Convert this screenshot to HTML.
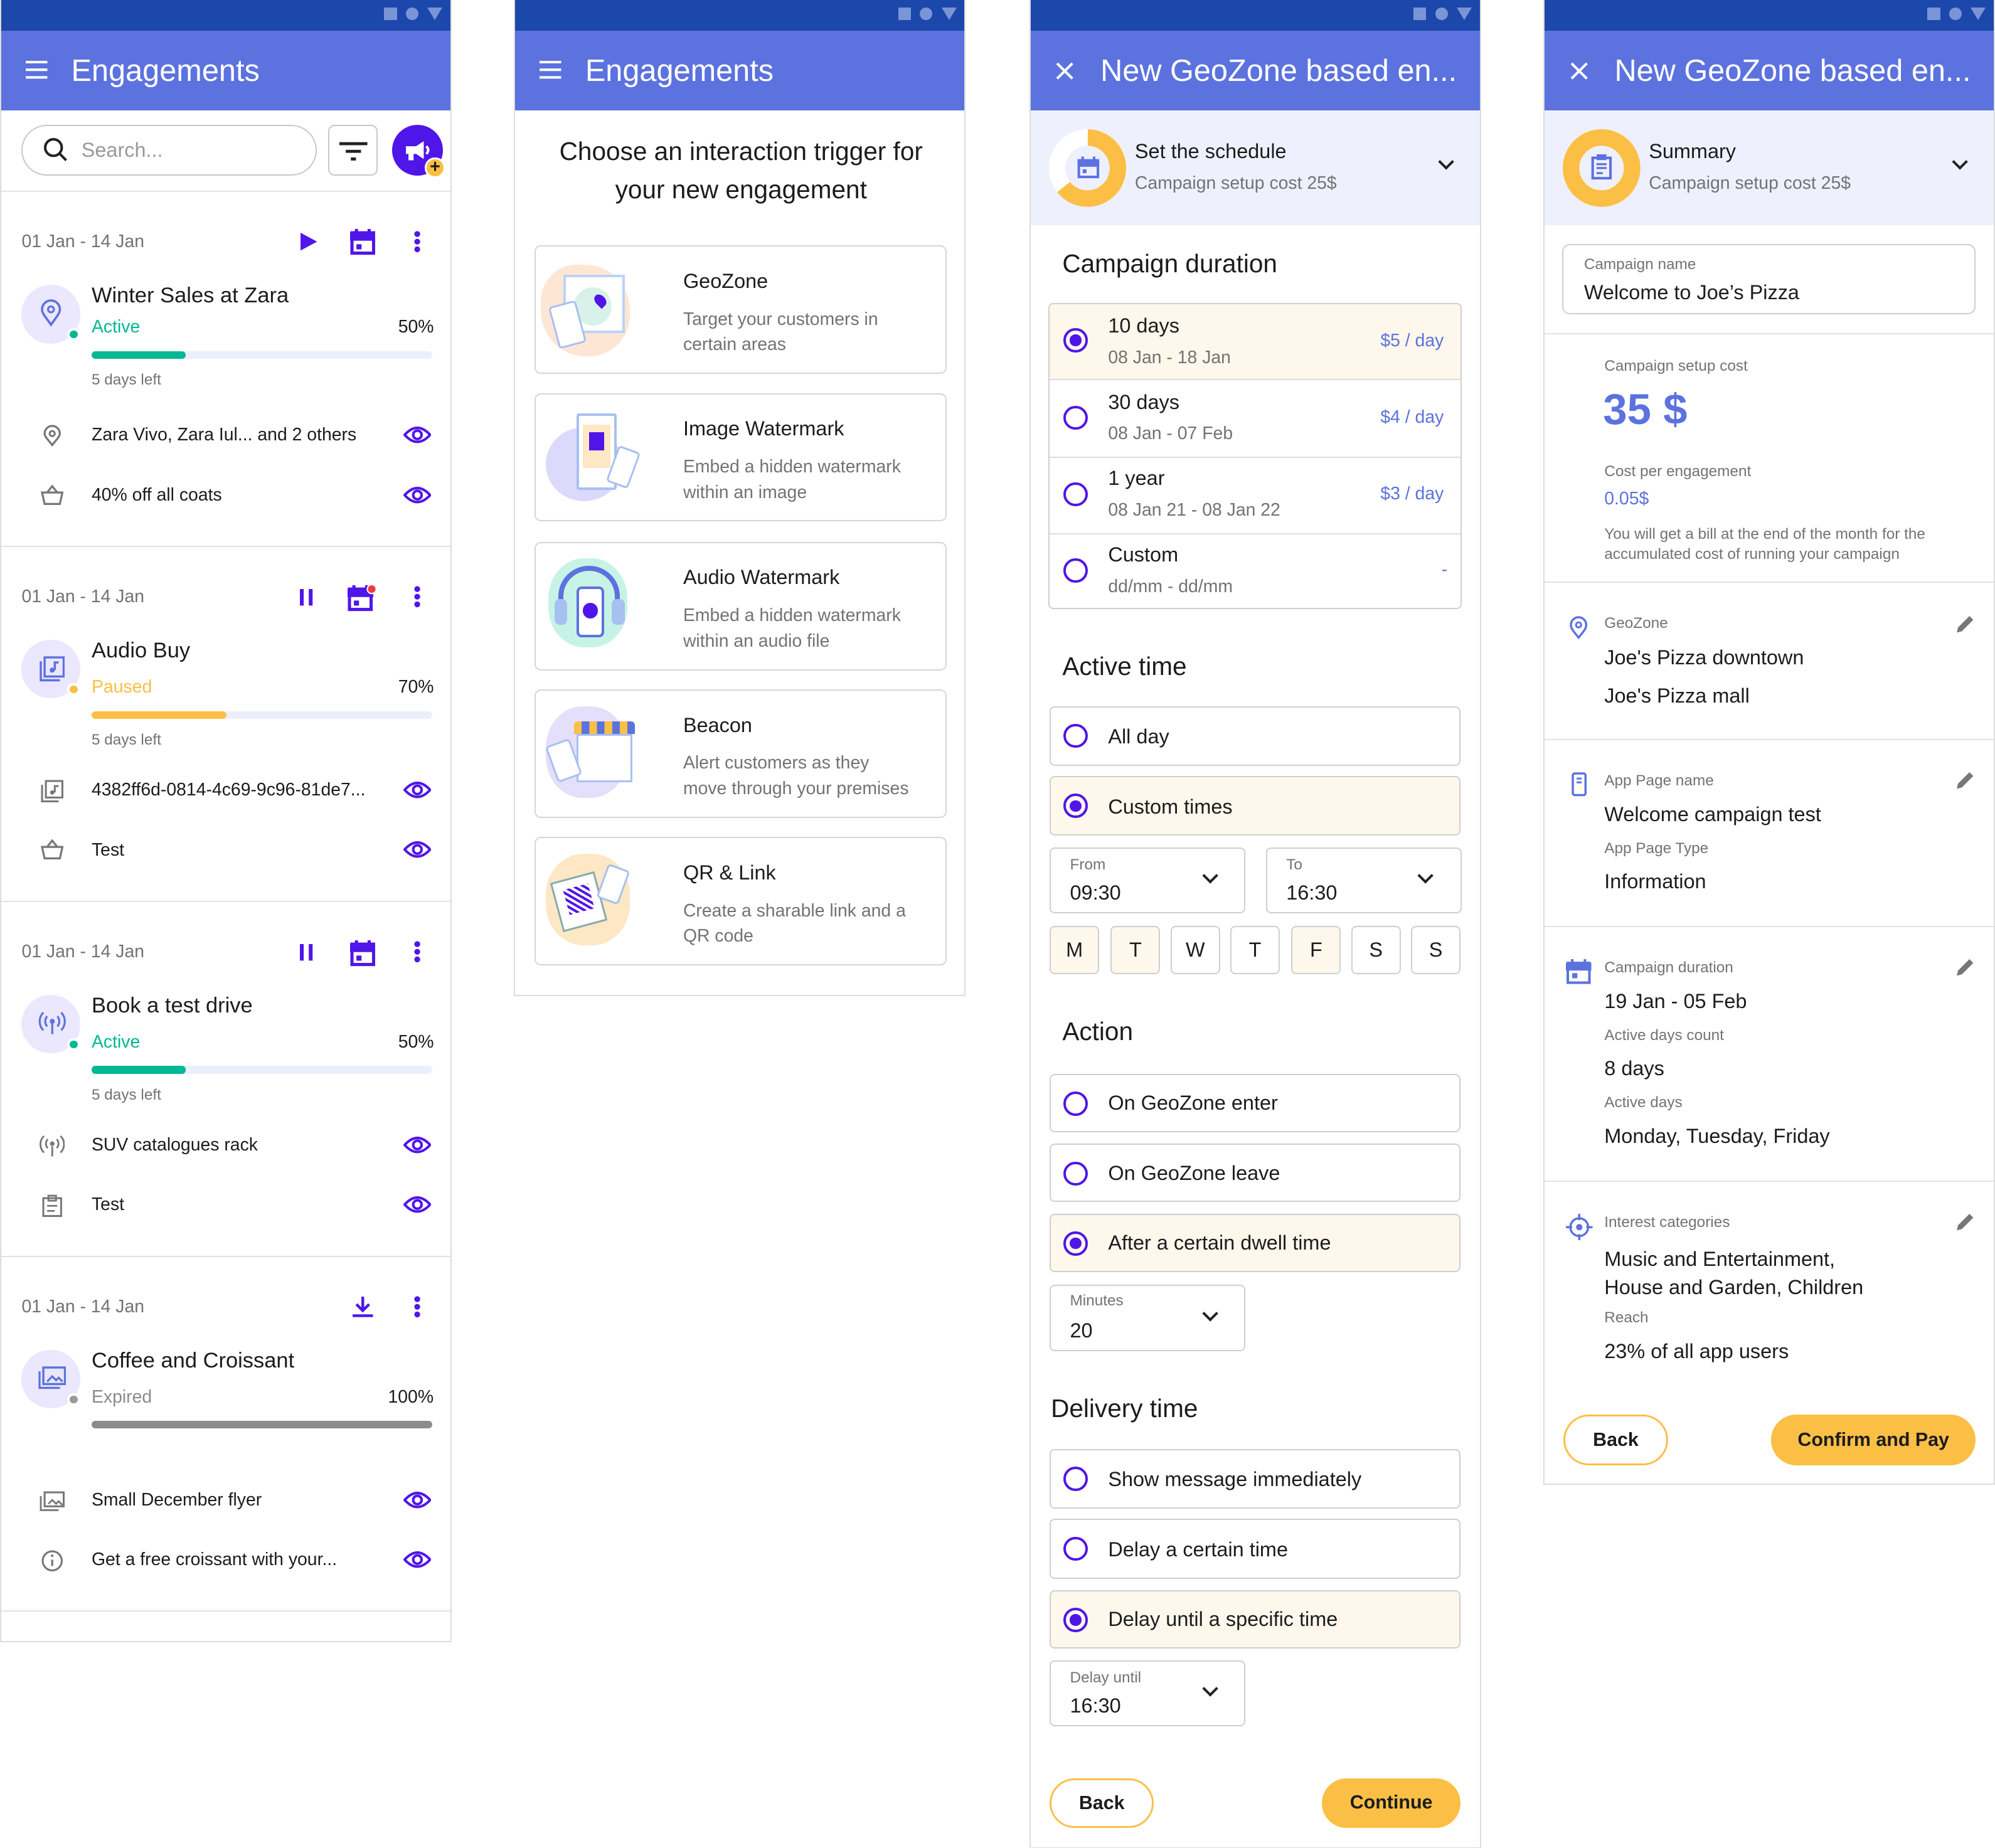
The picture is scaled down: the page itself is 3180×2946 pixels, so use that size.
<!DOCTYPE html>
<html><head><meta charset="utf-8"><style>
*{margin:0;padding:0;box-sizing:border-box}
html,body{width:3180px;height:2946px;overflow:hidden;background:#fff}
#root{zoom:2.028;width:1568px;height:1453px;position:relative;font-family:"Liberation Sans",sans-serif;color:#1c1c1c}
.p{position:absolute;top:0;background:#fff;border:1px solid #dcdcdc;border-top:none}
.sb{position:absolute;left:0;right:0;top:0;height:24px;background:#1c47ab}
.sb i{position:absolute;top:6px;background:#7a95d6}
.hd{position:absolute;left:0;right:0;top:24px;height:63px;background:#5c72de;color:#fff}
.hd span{position:absolute;left:55px;top:17px;font-size:24px;line-height:30px}
.t{position:absolute;line-height:1;white-space:nowrap}
.g{color:#737373}
.ln{position:absolute;left:0;right:0;height:1px;background:#e2e2e2}
.bx{position:absolute;border:1px solid #cfcfcf;border-radius:4px;background:#fff}
.sel{background:#fdf7ec}
.rad{position:absolute;width:19px;height:19px;border:2px solid #5015e8;border-radius:50%}
.rad.on::after{content:"";position:absolute;left:3px;top:3px;width:9px;height:9px;border-radius:50%;background:#5015e8}
.blue{color:#5c72de}
.av{position:absolute;left:16px;width:46px;height:46px;border-radius:50%;background:#ebe7fd}
.dot{position:absolute;width:10px;height:10px;border-radius:50%;border:2px solid #fff}
.bar{position:absolute;left:71px;width:268px;height:6px;border-radius:3px;background:#eceffb}
.bar b{display:block;height:6px;border-radius:3px}
.btn{position:absolute;border-radius:20px;font-size:15px;line-height:38px;text-align:center;font-weight:bold}
.chev{position:absolute;width:9px;height:9px;border-right:2px solid #222;border-bottom:2px solid #222;transform:rotate(45deg)}
.card{position:absolute;left:15px;width:324px;height:101px;border:1px solid #d6d6d6;border-radius:5px}
.day{position:absolute;top:728px;width:39px;height:38px;border:1px solid #cfcfcf;border-radius:4px;font-size:16px;line-height:36px;text-align:center}
</style></head><body><div id="root">

<!-- PANEL 1 -->
<div class="p" style="left:0;width:355px;height:1291px">
<div class="sb"><i style="left:301px;width:10px;height:10px"></i><i style="left:318px;width:10px;height:10px;border-radius:50%"></i><i style="left:335px;width:0;height:0;background:none;border-left:6px solid transparent;border-right:6px solid transparent;border-top:10px solid #7a95d6"></i></div>
<div class="hd"><svg style="position:absolute;left:19px;top:24px" width="18" height="14"><path d="M0 1h17M0 7h17M0 13h17" stroke="#fff" stroke-width="2"/></svg><span>Engagements</span></div>
<div style="position:absolute;left:16px;top:98px;width:232px;height:40px;border:1px solid #c8c8c8;border-radius:20px"></div>
<svg style="position:absolute;left:33px;top:108px" width="20" height="20"><circle cx="8" cy="8" r="6.5" fill="none" stroke="#222" stroke-width="2"/><path d="M13 13l5 5" stroke="#222" stroke-width="2"/></svg>
<div class="t" style="left:63px;top:110px;font-size:16px;color:#999">Search...</div>
<div style="position:absolute;left:257px;top:98px;width:39px;height:40px;border:1px solid #c8c8c8;border-radius:5px"></div>
<svg style="position:absolute;left:266px;top:110px" width="22" height="16"><path d="M0 3h22M5 9h12M9 15h4" stroke="#222" stroke-width="2.4"/></svg>
<div style="position:absolute;left:307px;top:98px;width:40px;height:40px;border-radius:50%;background:#5015e8"></div>
<svg style="position:absolute;left:316px;top:109px" width="22" height="18"><path d="M2 6h8l6-4v14l-6-4H2z M4 12v5h4v-5" fill="#fff"/><path d="M18 6q3 3 0 6" stroke="#fff" stroke-width="2" fill="none"/></svg>
<div style="position:absolute;left:333px;top:124px;width:16px;height:16px;border-radius:50%;background:#fbbf45;border:1.5px solid #fff;font-size:14px;line-height:12px;text-align:center;font-weight:bold">+</div>
<div class="ln" style="top:150px"></div>

<!-- card 1 -->
<div class="t g" style="left:16px;top:183px;font-size:14px">01 Jan - 14 Jan</div>
<svg style="position:absolute;left:233px;top:182px" width="16" height="16"><path d="M2 1l13 7-13 7z" fill="#5015e8"/></svg>
<svg style="position:absolute;left:274px;top:179px" width="20" height="22"><rect x="1.5" y="4" width="17" height="16" fill="none" stroke="#5015e8" stroke-width="2.5"/><path d="M1 5h18v4H1z M5 1v4M15 1v4" stroke="#5015e8" stroke-width="2.5" fill="#5015e8"/><rect x="5" y="13" width="4" height="4" fill="#5015e8"/></svg>
<svg style="position:absolute;left:324px;top:181px" width="6" height="18"><circle cx="3" cy="3" r="2.3" fill="#5015e8"/><circle cx="3" cy="9" r="2.3" fill="#5015e8"/><circle cx="3" cy="15" r="2.3" fill="#5015e8"/></svg>
<div class="av" style="top:224px"></div><svg style="position:absolute;left:30px;top:235px" width="18" height="22"><path d="M9 20C4 13 2 11 2 8a7 7 0 0 1 14 0c0 3-2 5-7 12z" fill="none" stroke="#5c72de" stroke-width="1.8"/><circle cx="9" cy="8" r="2.3" fill="none" stroke="#5c72de" stroke-width="1.6"/></svg>
<div class="dot" style="left:52px;top:258px;background:#00b894"></div>
<div class="t" style="left:71px;top:224px;font-size:17px">Winter Sales at Zara</div>
<div class="t" style="left:71px;top:250px;font-size:14px;color:#00b894">Active</div>
<div class="t" style="left:312px;top:250px;font-size:14px">50%</div>
<div class="bar" style="top:276px"><b style="width:74px;background:#00b894"></b></div>
<div class="t g" style="left:71px;top:293px;font-size:12px">5 days left</div>
<svg style="position:absolute;left:32px;top:334px" width="16" height="18"><path d="M8 16C4 11 2 9 2 7a6 6 0 0 1 12 0c0 2-2 4-6 9z" fill="none" stroke="#777" stroke-width="1.6"/><circle cx="8" cy="7" r="2" fill="none" stroke="#777" stroke-width="1.5"/></svg>
<div class="t" style="left:71px;top:335px;font-size:14px">Zara Vivo, Zara Iul... and 2 others</div>
<svg style="position:absolute;left:316px;top:334px" width="22" height="16"><path d="M1 8Q11-3 21 8Q11 19 1 8z" fill="none" stroke="#5015e8" stroke-width="2"/><circle cx="11" cy="8" r="3.3" fill="none" stroke="#5015e8" stroke-width="2"/></svg>
<svg style="position:absolute;left:31px;top:381px" width="18" height="16"><path d="M1 6h16l-2 9H3z M5 6l4-5 4 5" fill="none" stroke="#777" stroke-width="1.6"/></svg>
<div class="t" style="left:71px;top:382px;font-size:14px">40% off all coats</div>
<svg style="position:absolute;left:316px;top:381px" width="22" height="16"><path d="M1 8Q11-3 21 8Q11 19 1 8z" fill="none" stroke="#5015e8" stroke-width="2"/><circle cx="11" cy="8" r="3.3" fill="none" stroke="#5015e8" stroke-width="2"/></svg>
<div class="ln" style="top:429px"></div>

<!-- card 2 -->
<div class="t g" style="left:16px;top:462px;font-size:14px">01 Jan - 14 Jan</div>
<svg style="position:absolute;left:234px;top:462px" width="12" height="15"><path d="M2 1v13M9 1v13" stroke="#5015e8" stroke-width="3"/></svg>
<svg style="position:absolute;left:272px;top:459px" width="24" height="22"><rect x="1.5" y="4" width="17" height="16" fill="none" stroke="#5015e8" stroke-width="2.5"/><path d="M1 5h18v4H1z M5 1v4M15 1v4" stroke="#5015e8" stroke-width="2.5" fill="#5015e8"/><rect x="5" y="13" width="4" height="4" fill="#5015e8"/><circle cx="19" cy="4" r="3.5" fill="#f03b3b" stroke="#fff"/></svg>
<svg style="position:absolute;left:324px;top:460px" width="6" height="18"><circle cx="3" cy="3" r="2.3" fill="#5015e8"/><circle cx="3" cy="9" r="2.3" fill="#5015e8"/><circle cx="3" cy="15" r="2.3" fill="#5015e8"/></svg>
<div class="av" style="top:503px"></div><svg style="position:absolute;left:30px;top:516px" width="20" height="20"><rect x="4" y="1" width="15" height="15" fill="none" stroke="#5c72de" stroke-width="1.7"/><path d="M1 4v15h15" fill="none" stroke="#5c72de" stroke-width="1.7"/><circle cx="10" cy="11" r="2" fill="#5c72de"/><path d="M12 11V5h3" stroke="#5c72de" stroke-width="1.7" fill="none"/></svg>
<div class="dot" style="left:52px;top:537px;background:#fbbf45"></div>
<div class="t" style="left:71px;top:503px;font-size:17px">Audio Buy</div>
<div class="t" style="left:71px;top:533px;font-size:14px;color:#fbbf45">Paused</div>
<div class="t" style="left:312px;top:533px;font-size:14px">70%</div>
<div class="bar" style="top:559px"><b style="width:106px;background:#fbbf45"></b></div>
<div class="t g" style="left:71px;top:576px;font-size:12px">5 days left</div>
<svg style="position:absolute;left:31px;top:613px" width="18" height="18"><rect x="4" y="1" width="13" height="13" fill="none" stroke="#777" stroke-width="1.5"/><path d="M1 4v13h13" fill="none" stroke="#777" stroke-width="1.5"/><circle cx="9" cy="10" r="1.7" fill="#777"/><path d="M11 10V5h3" stroke="#777" stroke-width="1.5" fill="none"/></svg>
<div class="t" style="left:71px;top:614px;font-size:14px">4382ff6d-0814-4c69-9c96-81de7...</div>
<svg style="position:absolute;left:316px;top:613px" width="22" height="16"><path d="M1 8Q11-3 21 8Q11 19 1 8z" fill="none" stroke="#5015e8" stroke-width="2"/><circle cx="11" cy="8" r="3.3" fill="none" stroke="#5015e8" stroke-width="2"/></svg>
<svg style="position:absolute;left:31px;top:660px" width="18" height="16"><path d="M1 6h16l-2 9H3z M5 6l4-5 4 5" fill="none" stroke="#777" stroke-width="1.6"/></svg>
<div class="t" style="left:71px;top:661px;font-size:14px">Test</div>
<svg style="position:absolute;left:316px;top:660px" width="22" height="16"><path d="M1 8Q11-3 21 8Q11 19 1 8z" fill="none" stroke="#5015e8" stroke-width="2"/><circle cx="11" cy="8" r="3.3" fill="none" stroke="#5015e8" stroke-width="2"/></svg>
<div class="ln" style="top:708px"></div>

<!-- card 3 -->
<div class="t g" style="left:16px;top:741px;font-size:14px">01 Jan - 14 Jan</div>
<svg style="position:absolute;left:234px;top:741px" width="12" height="15"><path d="M2 1v13M9 1v13" stroke="#5015e8" stroke-width="3"/></svg>
<svg style="position:absolute;left:274px;top:738px" width="20" height="22"><rect x="1.5" y="4" width="17" height="16" fill="none" stroke="#5015e8" stroke-width="2.5"/><path d="M1 5h18v4H1z M5 1v4M15 1v4" stroke="#5015e8" stroke-width="2.5" fill="#5015e8"/><rect x="5" y="13" width="4" height="4" fill="#5015e8"/></svg>
<svg style="position:absolute;left:324px;top:739px" width="6" height="18"><circle cx="3" cy="3" r="2.3" fill="#5015e8"/><circle cx="3" cy="9" r="2.3" fill="#5015e8"/><circle cx="3" cy="15" r="2.3" fill="#5015e8"/></svg>
<div class="av" style="top:782px"></div><svg style="position:absolute;left:29px;top:795px" width="22" height="20"><circle cx="11" cy="8" r="2" fill="#5c72de"/><path d="M11 10v8M7 4a6 6 0 0 0 0 8M15 4a6 6 0 0 1 0 8M4 1a10 10 0 0 0 0 14M18 1a10 10 0 0 1 0 14" stroke="#5c72de" stroke-width="1.6" fill="none"/></svg>
<div class="dot" style="left:52px;top:816px;background:#00b894"></div>
<div class="t" style="left:71px;top:782px;font-size:17px">Book a test drive</div>
<div class="t" style="left:71px;top:812px;font-size:14px;color:#00b894">Active</div>
<div class="t" style="left:312px;top:812px;font-size:14px">50%</div>
<div class="bar" style="top:838px"><b style="width:74px;background:#00b894"></b></div>
<div class="t g" style="left:71px;top:855px;font-size:12px">5 days left</div>
<svg style="position:absolute;left:30px;top:892px" width="20" height="18"><circle cx="10" cy="7" r="1.8" fill="#777"/><path d="M10 9v8M6.5 3.5a5 5 0 0 0 0 7M13.5 3.5a5 5 0 0 1 0 7M3.5 1a9 9 0 0 0 0 13M16.5 1a9 9 0 0 1 0 13" stroke="#777" stroke-width="1.4" fill="none"/></svg>
<div class="t" style="left:71px;top:893px;font-size:14px">SUV catalogues rack</div>
<svg style="position:absolute;left:316px;top:892px" width="22" height="16"><path d="M1 8Q11-3 21 8Q11 19 1 8z" fill="none" stroke="#5015e8" stroke-width="2"/><circle cx="11" cy="8" r="3.3" fill="none" stroke="#5015e8" stroke-width="2"/></svg>
<svg style="position:absolute;left:32px;top:939px" width="16" height="18"><rect x="1" y="3" width="14" height="14" fill="none" stroke="#777" stroke-width="1.5"/><path d="M5 1h6v4H5z M4 9h8M4 13h6" stroke="#777" stroke-width="1.4" fill="none"/></svg>
<div class="t" style="left:71px;top:940px;font-size:14px">Test</div>
<svg style="position:absolute;left:316px;top:939px" width="22" height="16"><path d="M1 8Q11-3 21 8Q11 19 1 8z" fill="none" stroke="#5015e8" stroke-width="2"/><circle cx="11" cy="8" r="3.3" fill="none" stroke="#5015e8" stroke-width="2"/></svg>
<div class="ln" style="top:987px"></div>

<!-- card 4 -->
<div class="t g" style="left:16px;top:1020px;font-size:14px">01 Jan - 14 Jan</div>
<svg style="position:absolute;left:275px;top:1018px" width="18" height="18"><path d="M9 1v11M4 7l5 5 5-5M1 16h16" stroke="#5015e8" stroke-width="2.2" fill="none"/></svg>
<svg style="position:absolute;left:324px;top:1018px" width="6" height="18"><circle cx="3" cy="3" r="2.3" fill="#5015e8"/><circle cx="3" cy="9" r="2.3" fill="#5015e8"/><circle cx="3" cy="15" r="2.3" fill="#5015e8"/></svg>
<div class="av" style="top:1061px"></div><svg style="position:absolute;left:29px;top:1074px" width="22" height="18"><rect x="4" y="1" width="17" height="13" fill="none" stroke="#5c72de" stroke-width="1.7"/><path d="M1 4v13h16M7 12l4-4 3 3 2-2 3 3" stroke="#5c72de" stroke-width="1.6" fill="none"/></svg>
<div class="dot" style="left:52px;top:1095px;background:#9a9a9a"></div>
<div class="t" style="left:71px;top:1061px;font-size:17px">Coffee and Croissant</div>
<div class="t g" style="left:71px;top:1091px;font-size:14px;color:#8a8a8a">Expired</div>
<div class="t" style="left:304px;top:1091px;font-size:14px">100%</div>
<div class="bar" style="top:1117px"><b style="width:268px;background:#8c8c8c"></b></div>
<svg style="position:absolute;left:30px;top:1172px" width="20" height="16"><rect x="4" y="1" width="15" height="11" fill="none" stroke="#777" stroke-width="1.5"/><path d="M1 4v11h14M7 10l3-3 3 3 2-2 3 3" stroke="#777" stroke-width="1.4" fill="none"/></svg>
<div class="t" style="left:71px;top:1172px;font-size:14px">Small December flyer</div>
<svg style="position:absolute;left:316px;top:1171px" width="22" height="16"><path d="M1 8Q11-3 21 8Q11 19 1 8z" fill="none" stroke="#5015e8" stroke-width="2"/><circle cx="11" cy="8" r="3.3" fill="none" stroke="#5015e8" stroke-width="2"/></svg>
<svg style="position:absolute;left:31px;top:1218px" width="18" height="18"><circle cx="9" cy="9" r="7.5" fill="none" stroke="#777" stroke-width="1.5"/><path d="M9 8v5" stroke="#777" stroke-width="1.6"/><circle cx="9" cy="5" r="1" fill="#777"/></svg>
<div class="t" style="left:71px;top:1219px;font-size:14px">Get a free croissant with your...</div>
<svg style="position:absolute;left:316px;top:1218px" width="22" height="16"><path d="M1 8Q11-3 21 8Q11 19 1 8z" fill="none" stroke="#5015e8" stroke-width="2"/><circle cx="11" cy="8" r="3.3" fill="none" stroke="#5015e8" stroke-width="2"/></svg>
<div class="ln" style="top:1266px"></div>
</div>

<!-- PANEL 2 -->
<div class="p" style="left:404px;width:355px;height:783px">
<div class="sb"><i style="left:301px;width:10px;height:10px"></i><i style="left:318px;width:10px;height:10px;border-radius:50%"></i><i style="left:335px;width:0;height:0;background:none;border-left:6px solid transparent;border-right:6px solid transparent;border-top:10px solid #7a95d6"></i></div>
<div class="hd"><svg style="position:absolute;left:19px;top:24px" width="18" height="14"><path d="M0 1h17M0 7h17M0 13h17" stroke="#fff" stroke-width="2"/></svg><span>Engagements</span></div>
<div class="t" style="left:0;width:355px;text-align:center;top:104px;font-size:20px;line-height:30px;white-space:normal">Choose an interaction trigger for<br>your new engagement</div>

<div class="card" style="top:193px"><div style="position:absolute;left:4px;top:14px;width:70px;height:72px;border-radius:40% 50% 45% 50%;background:#fde7d4"></div><div style="position:absolute;left:22px;top:22px;width:48px;height:46px;background:#fff;border:2px solid #bcd2f7"></div><div style="position:absolute;left:30px;top:32px;width:30px;height:30px;border-radius:50%;background:#d8f2ea"></div><div style="position:absolute;left:47px;top:37px;width:8px;height:11px;border-radius:50% 50% 50% 0;background:#5015e8;transform:rotate(-45deg)"></div><div style="position:absolute;left:14px;top:44px;width:22px;height:34px;background:#fff;border:1.5px solid #a8c0f0;border-radius:3px;transform:rotate(-15deg)"></div>
<div class="t" style="left:116px;top:19px;font-size:16px">GeoZone</div><div class="t g" style="left:116px;top:47px;font-size:14px;line-height:20px">Target your customers in<br>certain areas</div></div>

<div class="card" style="top:309px"><div style="position:absolute;left:8px;top:26px;width:60px;height:58px;border-radius:50%;background:#dcdafc"></div><div style="position:absolute;left:32px;top:15px;width:32px;height:60px;background:#fff;border:2px solid #a8c0f0;border-radius:2px"></div><div style="position:absolute;left:37px;top:24px;width:22px;height:34px;background:#fde7c4"></div><div style="position:absolute;left:42px;top:30px;width:12px;height:14px;background:#5015e8"></div><div style="position:absolute;left:60px;top:42px;width:18px;height:30px;background:#fff;border:1.5px solid #a8c0f0;border-radius:3px;transform:rotate(20deg)"></div>
<div class="t" style="left:116px;top:19px;font-size:16px">Image Watermark</div><div class="t g" style="left:116px;top:47px;font-size:14px;line-height:20px">Embed a hidden watermark<br>within an image</div></div>

<div class="card" style="top:426px"><div style="position:absolute;left:10px;top:12px;width:62px;height:70px;border-radius:45%;background:#c7f3e6"></div><div style="position:absolute;left:18px;top:18px;width:48px;height:40px;border:4px solid #5c72de;border-bottom:none;border-radius:24px 24px 0 0"></div><div style="position:absolute;left:15px;top:44px;width:10px;height:20px;background:#a8c0f0;border-radius:4px"></div><div style="position:absolute;left:60px;top:44px;width:10px;height:20px;background:#a8c0f0;border-radius:4px"></div><div style="position:absolute;left:32px;top:34px;width:22px;height:40px;background:#fff;border:2px solid #5c72de;border-radius:4px"></div><div style="position:absolute;left:37px;top:47px;width:12px;height:12px;border-radius:50%;background:#5015e8"></div>
<div class="t" style="left:116px;top:19px;font-size:16px">Audio Watermark</div><div class="t g" style="left:116px;top:47px;font-size:14px;line-height:20px">Embed a hidden watermark<br>within an audio file</div></div>

<div class="card" style="top:542px"><div style="position:absolute;left:8px;top:12px;width:64px;height:72px;border-radius:45%;background:#e4e0fb"></div><div style="position:absolute;left:30px;top:24px;width:48px;height:10px;background:repeating-linear-gradient(90deg,#fbbf45 0 6px,#5c72de 6px 12px);border-radius:3px 3px 0 0"></div><div style="position:absolute;left:32px;top:34px;width:44px;height:38px;background:#fff;border:1.5px solid #a8c0f0"></div><div style="position:absolute;left:12px;top:40px;width:20px;height:30px;background:#fff;border:1.5px solid #a8c0f0;border-radius:3px;transform:rotate(-20deg)"></div>
<div class="t" style="left:116px;top:19px;font-size:16px">Beacon</div><div class="t g" style="left:116px;top:47px;font-size:14px;line-height:20px">Alert customers as they<br>move through your premises</div></div>

<div class="card" style="top:658px"><div style="position:absolute;left:8px;top:12px;width:66px;height:72px;border-radius:45%;background:#fde7c4"></div><div style="position:absolute;left:16px;top:30px;width:36px;height:40px;background:#fff;border:1.5px solid #8aa;transform:rotate(-15deg)"></div><div style="position:absolute;left:24px;top:38px;width:20px;height:20px;background:repeating-linear-gradient(45deg,#5015e8 0 2px,#fff 2px 4px);transform:rotate(-15deg)"></div><div style="position:absolute;left:52px;top:22px;width:18px;height:28px;background:#fff;border:1.5px solid #a8c0f0;border-radius:3px;transform:rotate(20deg)"></div>
<div class="t" style="left:116px;top:19px;font-size:16px">QR &amp; Link</div><div class="t g" style="left:116px;top:47px;font-size:14px;line-height:20px">Create a sharable link and a<br>QR code</div></div>
</div>

<!-- PANEL 3 -->
<div class="p" style="left:809px;width:355px;height:1453px">
<div class="sb"><i style="left:301px;width:10px;height:10px"></i><i style="left:318px;width:10px;height:10px;border-radius:50%"></i><i style="left:335px;width:0;height:0;background:none;border-left:6px solid transparent;border-right:6px solid transparent;border-top:10px solid #7a95d6"></i></div>
<div class="hd"><svg style="position:absolute;left:20px;top:25px" width="14" height="14"><path d="M1 1l12 12M13 1L1 13" stroke="#fff" stroke-width="2"/></svg><span>New GeoZone based en...</span></div>
<div style="position:absolute;left:0;right:0;top:87px;height:90px;background:#eef0fe"></div>
<svg style="position:absolute;left:14px;top:101px" width="62" height="62"><circle cx="31" cy="31" r="24" fill="none" stroke="#fff" stroke-width="13"/><path d="M31 7A24 24 0 1 1 12 46" fill="none" stroke="#fbbf45" stroke-width="13"/><circle cx="31" cy="31" r="17" fill="#eef0fe"/><rect x="24" y="25" width="15" height="13" fill="none" stroke="#5c72de" stroke-width="2"/><path d="M24 26h15v3H24zM27 22v4M36 22v4" stroke="#5c72de" stroke-width="2" fill="#5c72de"/><rect x="27" y="32" width="3" height="3" fill="#5c72de"/></svg>
<div class="t" style="left:82px;top:111px;font-size:16px">Set the schedule</div>
<div class="t g" style="left:82px;top:137px;font-size:14px">Campaign setup cost 25$</div>
<div class="chev" style="left:322px;top:123px"></div>
<div class="t" style="left:25px;top:197px;font-size:20px">Campaign duration</div>
<div class="bx" style="left:14px;top:238px;width:325px;height:241px;overflow:hidden">
 <div class="sel" style="position:absolute;left:0;right:0;top:0;height:60px;border-bottom:1px solid #ddd"></div>
 <div style="position:absolute;left:0;right:0;top:120px;height:1px;background:#ddd"></div>
 <div style="position:absolute;left:0;right:0;top:180px;height:1px;background:#ddd"></div>
</div>
<div class="rad on" style="left:835px;top:258px;left:26px"></div>
<div class="rad" style="left:26px;top:319px"></div><div class="rad" style="left:26px;top:379px"></div><div class="rad" style="left:26px;top:439px"></div>
<div class="t" style="left:61px;top:248px;font-size:16px">10 days</div><div class="t g" style="left:61px;top:274px;font-size:14px">08 Jan - 18 Jan</div><div class="t blue" style="left:275px;top:261px;font-size:14px">$5 / day</div>
<div class="t" style="left:61px;top:308px;font-size:16px">30 days</div><div class="t g" style="left:61px;top:334px;font-size:14px">08 Jan - 07 Feb</div><div class="t blue" style="left:275px;top:321px;font-size:14px">$4 / day</div>
<div class="t" style="left:61px;top:368px;font-size:16px">1 year</div><div class="t g" style="left:61px;top:394px;font-size:14px">08 Jan 21 - 08 Jan 22</div><div class="t blue" style="left:275px;top:381px;font-size:14px">$3 / day</div>
<div class="t" style="left:61px;top:428px;font-size:16px">Custom</div><div class="t g" style="left:61px;top:454px;font-size:14px">dd/mm - dd/mm</div><div class="t blue" style="left:323px;top:441px;font-size:14px">-</div>

<div class="t" style="left:25px;top:514px;font-size:20px">Active time</div>
<div class="bx" style="left:15px;top:555px;width:323px;height:47px"></div><div class="rad" style="left:26px;top:569px"></div><div class="t" style="left:61px;top:571px;font-size:16px">All day</div>
<div class="bx sel" style="left:15px;top:610px;width:323px;height:47px"></div><div class="rad on" style="left:26px;top:624px"></div><div class="t" style="left:61px;top:626px;font-size:16px">Custom times</div>
<div class="bx" style="left:15px;top:666px;width:154px;height:52px"></div><div class="t g" style="left:31px;top:674px;font-size:12px">From</div><div class="t" style="left:31px;top:694px;font-size:16px">09:30</div><div class="chev" style="left:137px;top:684px"></div>
<div class="bx" style="left:185px;top:666px;width:154px;height:52px"></div><div class="t g" style="left:201px;top:674px;font-size:12px">To</div><div class="t" style="left:201px;top:694px;font-size:16px">16:30</div><div class="chev" style="left:306px;top:684px"></div>
<div class="day sel" style="left:15px">M</div><div class="day sel" style="left:63px">T</div><div class="day" style="left:110px">W</div><div class="day" style="left:157px">T</div><div class="day sel" style="left:205px">F</div><div class="day" style="left:252px">S</div><div class="day" style="left:299px">S</div>

<div class="t" style="left:25px;top:801px;font-size:20px">Action</div>
<div class="bx" style="left:15px;top:844px;width:323px;height:46px"></div><div class="rad" style="left:26px;top:858px"></div><div class="t" style="left:61px;top:859px;font-size:16px">On GeoZone enter</div>
<div class="bx" style="left:15px;top:899px;width:323px;height:46px"></div><div class="rad" style="left:26px;top:913px"></div><div class="t" style="left:61px;top:914px;font-size:16px">On GeoZone leave</div>
<div class="bx sel" style="left:15px;top:954px;width:323px;height:46px"></div><div class="rad on" style="left:26px;top:968px"></div><div class="t" style="left:61px;top:969px;font-size:16px">After a certain dwell time</div>
<div class="bx" style="left:15px;top:1010px;width:154px;height:52px"></div><div class="t g" style="left:31px;top:1017px;font-size:12px">Minutes</div><div class="t" style="left:31px;top:1038px;font-size:16px">20</div><div class="chev" style="left:137px;top:1028px"></div>

<div class="t" style="left:16px;top:1097px;font-size:20px">Delivery time</div>
<div class="bx" style="left:15px;top:1139px;width:323px;height:47px"></div><div class="rad" style="left:26px;top:1153px"></div><div class="t" style="left:61px;top:1155px;font-size:16px">Show message immediately</div>
<div class="bx" style="left:15px;top:1194px;width:323px;height:47px"></div><div class="rad" style="left:26px;top:1208px"></div><div class="t" style="left:61px;top:1210px;font-size:16px">Delay a certain time</div>
<div class="bx sel" style="left:15px;top:1250px;width:323px;height:46px"></div><div class="rad on" style="left:26px;top:1264px"></div><div class="t" style="left:61px;top:1265px;font-size:16px">Delay until a specific time</div>
<div class="bx" style="left:15px;top:1305px;width:154px;height:52px"></div><div class="t g" style="left:31px;top:1313px;font-size:12px">Delay until</div><div class="t" style="left:31px;top:1333px;font-size:16px">16:30</div><div class="chev" style="left:137px;top:1323px"></div>
<div class="btn" style="left:15px;top:1398px;width:82px;height:39px;border:1.5px solid #fbbf45;line-height:36px">Back</div>
<div class="btn" style="left:229px;top:1398px;width:109px;height:39px;background:#fbbf45">Continue</div>
</div>

<!-- PANEL 4 -->
<div class="p" style="left:1213px;width:355px;height:1167px">
<div class="sb"><i style="left:301px;width:10px;height:10px"></i><i style="left:318px;width:10px;height:10px;border-radius:50%"></i><i style="left:335px;width:0;height:0;background:none;border-left:6px solid transparent;border-right:6px solid transparent;border-top:10px solid #7a95d6"></i></div>
<div class="hd"><svg style="position:absolute;left:20px;top:25px" width="14" height="14"><path d="M1 1l12 12M13 1L1 13" stroke="#fff" stroke-width="2"/></svg><span>New GeoZone based en...</span></div>
<div style="position:absolute;left:0;right:0;top:87px;height:90px;background:#eef0fe"></div>
<svg style="position:absolute;left:14px;top:101px" width="62" height="62"><circle cx="31" cy="31" r="24" fill="none" stroke="#fbbf45" stroke-width="13"/><circle cx="31" cy="31" r="17" fill="#eef0fe"/><rect x="24" y="23" width="14" height="16" fill="none" stroke="#5c72de" stroke-width="2"/><path d="M28 21h6v3h-6zM27 28h8M27 31h8M27 35h5" stroke="#5c72de" stroke-width="1.6" fill="#5c72de"/></svg>
<div class="t" style="left:82px;top:111px;font-size:16px">Summary</div>
<div class="t g" style="left:82px;top:137px;font-size:14px">Campaign setup cost 25$</div>
<div class="chev" style="left:322px;top:123px"></div>
<div class="bx" style="left:14px;top:192px;width:325px;height:55px;border-radius:6px"></div>
<div class="t g" style="left:31px;top:202px;font-size:12px">Campaign name</div>
<div class="t" style="left:31px;top:222px;font-size:16px">Welcome to Joe’s Pizza</div>
<div class="ln" style="top:262px"></div>
<div class="t g" style="left:47px;top:282px;font-size:12px">Campaign setup cost</div>
<div class="t blue" style="left:46px;top:305px;font-size:34px;font-weight:bold">35 $</div>
<div class="t g" style="left:47px;top:365px;font-size:12px">Cost per engagement</div>
<div class="t blue" style="left:47px;top:385px;font-size:14px">0.05$</div>
<div class="t g" style="left:47px;top:412px;font-size:12px;line-height:16px">You will get a bill at the end of the month for the<br>accumulated cost of running your campaign</div>
<div class="ln" style="top:457px"></div>

<svg style="position:absolute;left:19px;top:484px" width="16" height="19"><path d="M8 17C4 12 2 10 2 7a6 6 0 0 1 12 0c0 3-2 5-6 10z" fill="none" stroke="#5c72de" stroke-width="1.7"/><circle cx="8" cy="7" r="2" fill="none" stroke="#5c72de" stroke-width="1.5"/></svg>
<div class="t g" style="left:47px;top:484px;font-size:12px">GeoZone</div>
<div class="t" style="left:47px;top:509px;font-size:16px">Joe's Pizza downtown</div>
<div class="t" style="left:47px;top:539px;font-size:16px">Joe's Pizza mall</div>
<svg style="position:absolute;left:323px;top:483px" width="15" height="15"><path d="M1 14l1-4 9-9 3 3-9 9z" fill="#777"/></svg>
<div class="ln" style="top:581px"></div>
<svg style="position:absolute;left:21px;top:607px" width="12" height="19"><rect x="1" y="1" width="10" height="17" rx="1.5" fill="none" stroke="#5c72de" stroke-width="1.7"/><path d="M4 5h4M4 8h4" stroke="#5c72de" stroke-width="1.5"/></svg>
<div class="t g" style="left:47px;top:608px;font-size:12px">App Page name</div>
<div class="t" style="left:47px;top:632px;font-size:16px">Welcome campaign test</div>
<div class="t g" style="left:47px;top:661px;font-size:12px">App Page Type</div>
<div class="t" style="left:47px;top:685px;font-size:16px">Information</div>
<svg style="position:absolute;left:323px;top:606px" width="15" height="15"><path d="M1 14l1-4 9-9 3 3-9 9z" fill="#777"/></svg>
<div class="ln" style="top:728px"></div>
<svg style="position:absolute;left:17px;top:753px" width="20" height="21"><rect x="1.5" y="4" width="17" height="15.5" fill="none" stroke="#5c72de" stroke-width="2"/><path d="M1 5h18v4H1z M5 1v4M15 1v4" stroke="#5c72de" stroke-width="2" fill="#5c72de"/><rect x="5" y="12" width="4" height="4" fill="#5c72de"/></svg>
<div class="t g" style="left:47px;top:755px;font-size:12px">Campaign duration</div>
<div class="t" style="left:47px;top:779px;font-size:16px">19 Jan - 05 Feb</div>
<div class="t g" style="left:47px;top:808px;font-size:12px">Active days count</div>
<div class="t" style="left:47px;top:832px;font-size:16px">8 days</div>
<div class="t g" style="left:47px;top:861px;font-size:12px">Active days</div>
<div class="t" style="left:47px;top:885px;font-size:16px">Monday, Tuesday, Friday</div>
<svg style="position:absolute;left:323px;top:753px" width="15" height="15"><path d="M1 14l1-4 9-9 3 3-9 9z" fill="#777"/></svg>
<div class="ln" style="top:928px"></div>
<svg style="position:absolute;left:17px;top:954px" width="21" height="21"><circle cx="10.5" cy="10.5" r="7" fill="none" stroke="#5c72de" stroke-width="1.7"/><circle cx="10.5" cy="10.5" r="2.5" fill="#5c72de"/><path d="M10.5 0v5M10.5 16v5M0 10.5h5M16 10.5h5" stroke="#5c72de" stroke-width="1.7"/></svg>
<div class="t g" style="left:47px;top:955px;font-size:12px">Interest categories</div>
<div class="t" style="left:47px;top:979px;font-size:16px;line-height:22px">Music and Entertainment,<br>House and Garden, Children</div>
<div class="t g" style="left:47px;top:1030px;font-size:12px">Reach</div>
<div class="t" style="left:47px;top:1054px;font-size:16px">23% of all app users</div>
<svg style="position:absolute;left:323px;top:953px" width="15" height="15"><path d="M1 14l1-4 9-9 3 3-9 9z" fill="#777"/></svg>
<div class="btn" style="left:15px;top:1112px;width:82px;height:40px;border:1.5px solid #fbbf45;line-height:37px">Back</div>
<div class="btn" style="left:178px;top:1112px;width:161px;height:40px;background:#fbbf45;line-height:40px">Confirm and Pay</div>
</div>

</div></body></html>
